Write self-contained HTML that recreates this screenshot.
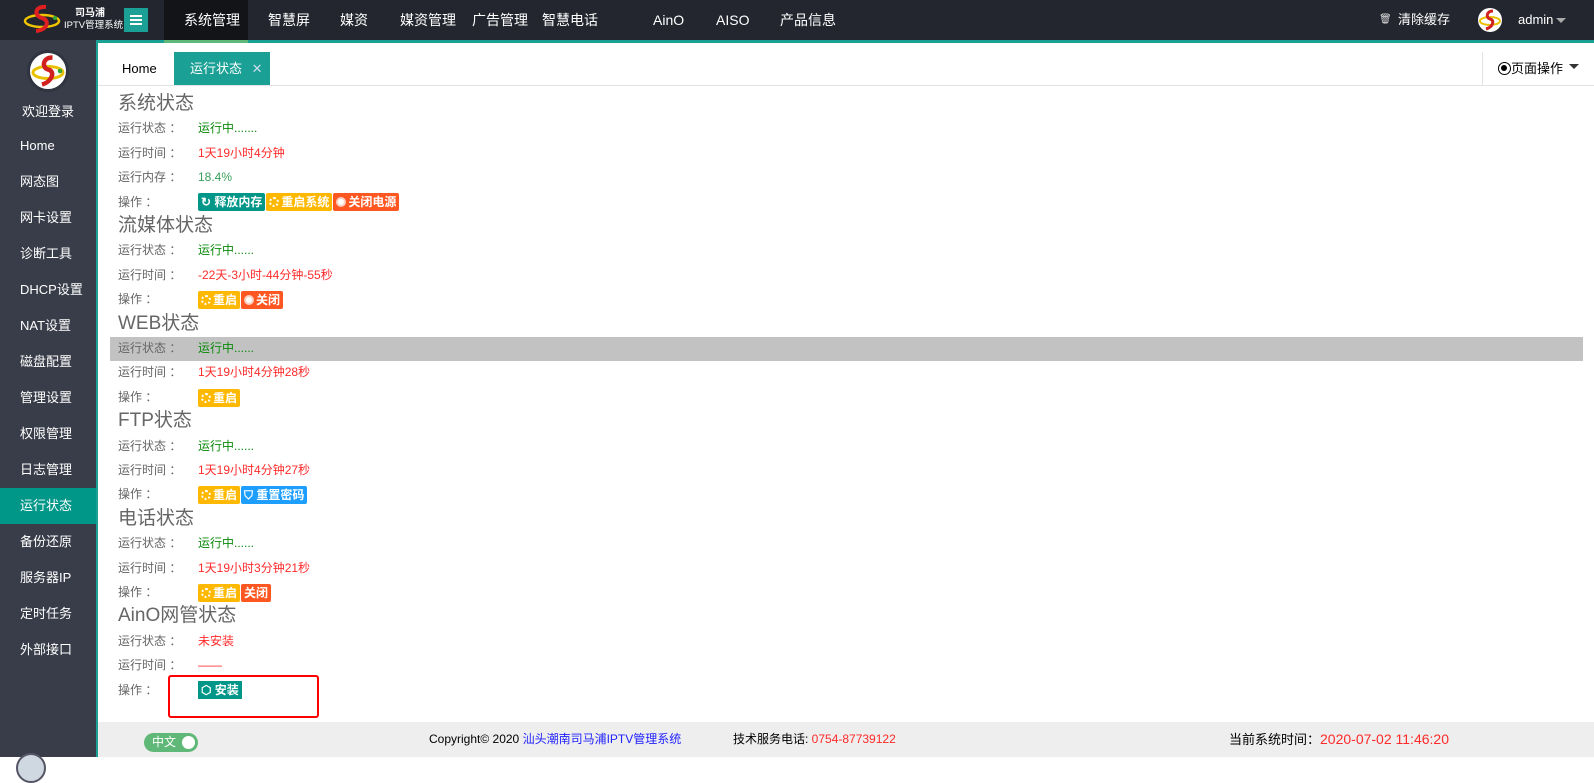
<!DOCTYPE html>
<html><head><meta charset="utf-8"><style>
*{margin:0;padding:0;box-sizing:border-box}
body{width:1594px;height:757px;overflow:hidden;background:#fff;font-family:"Liberation Sans","Noto Sans CJK SC",sans-serif;position:relative}
.abs{position:absolute}
#top{left:0;top:0;width:1594px;height:40px;background:#23262e}
#tline{left:0;top:40px;width:1594px;height:3px;background:#1aa094}
.nav{top:0;height:40px;line-height:40px;color:#fff;font-size:14px}
#side{left:0;top:40px;width:96px;height:717px;background:#393d49}
#sbor{left:96px;top:40px;width:2px;height:717px;background:#1aa094}
.si{left:0;width:96px;height:36px;line-height:36px;color:#fff;font-size:13px;padding-left:20px}
.row{left:118px;height:24.4px;line-height:24.4px;font-size:12px;color:#666;width:1460px}
.row .v{position:absolute;left:80px;top:0}
.title{font-size:19px;color:#666}
.g{color:#0a8a0a}.r{color:#ff2a2a}
.btn{display:inline-block;height:18px;line-height:18px;color:#fff;font-size:12px;font-weight:bold;padding:0 3px;margin-right:1px;vertical-align:middle;border-radius:2px}
.t{background:#009688}.o{background:#ffb800}.rd{background:#ff5722}.b{background:#1e9fff}
.ic{display:inline-block;width:10px;height:10px;border-radius:50%;vertical-align:-1px;margin-right:2px}
.dots{border:2px dotted #fff}
.dot{background:#fff;border:2px solid #ffd0c0}
</style></head><body>
<div class="abs" id="top"></div>
<div class="abs" id="tline"></div>
<div class="abs" style="left:164px;top:0;width:84px;height:40px;background:#121418"></div>
<div class="abs" style="left:164px;top:40px;width:84px;height:3px;background:#5fb878"></div>
<svg class="abs" style="left:22px;top:4px" width="40" height="30" viewBox="0 0 40 30"><ellipse cx="20" cy="17" rx="17" ry="6" fill="none" stroke="#f0c400" stroke-width="2.5"/><path d="M24 3 C12 2 12 12 20 14 C28 16 26 26 14 27" fill="none" stroke="#e02020" stroke-width="4"/><circle cx="33" cy="14" r="2" fill="#3a3"/></svg>
<div class="abs" style="left:64px;top:8px;width:52px;color:#fff;font-size:10px;line-height:12px;font-weight:bold;text-align:center;white-space:nowrap">司马浦<br><span style="font-weight:normal;font-size:9.5px">IPTV管理系统</span></div>
<div class="abs" style="left:124px;top:8px;width:24px;height:24px;background:#1aa094"><div style="position:absolute;left:6px;top:7px;width:12px;height:2px;background:#fff"></div><div style="position:absolute;left:6px;top:11px;width:12px;height:2px;background:#fff"></div><div style="position:absolute;left:6px;top:15px;width:12px;height:2px;background:#fff"></div></div>
<div class="abs nav" style="left:184px">系统管理</div>
<div class="abs nav" style="left:268px">智慧屏</div>
<div class="abs nav" style="left:340px">媒资</div>
<div class="abs nav" style="left:400px">媒资管理</div>
<div class="abs nav" style="left:472px">广告管理</div>
<div class="abs nav" style="left:542px">智慧电话</div>
<div class="abs nav" style="left:653px">AinO</div>
<div class="abs nav" style="left:716px">AISO</div>
<div class="abs nav" style="left:780px">产品信息</div>
<div class="abs nav" style="left:1379px;font-size:10px;color:#ddd">🗑</div>
<div class="abs nav" style="left:1398px;font-size:13px">清除缓存</div>
<div class="abs" style="left:1478px;top:8px;width:24px;height:24px;border-radius:50%;background:#fff;overflow:hidden"><svg width="24" height="24" viewBox="0 0 24 24"><ellipse cx="12" cy="13" rx="10" ry="4" fill="none" stroke="#e8c000" stroke-width="2"/><path d="M15 3C8 3 8 10 12 11C17 12 15 19 8 21" fill="none" stroke="#d02020" stroke-width="3"/></svg></div>
<div class="abs nav" style="left:1518px;font-size:13px">admin</div>
<div class="abs" style="left:1556px;top:18px;border:5px solid transparent;border-top-color:#aaa"></div>
<div class="abs" id="side"></div>
<div class="abs" id="sbor"></div>
<div class="abs" style="left:27px;top:50px;width:42px;height:42px;border-radius:50%;background:#fff;border:3px solid #2f3440;overflow:hidden"><svg width="36" height="36" viewBox="0 0 24 24"><ellipse cx="12" cy="13" rx="10" ry="4" fill="none" stroke="#e8c000" stroke-width="2"/><path d="M15 3C8 3 8 10 12 11C17 12 15 19 8 21" fill="none" stroke="#d02020" stroke-width="3"/><circle cx="20" cy="12" r="1.5" fill="#3a3"/></svg></div>
<div class="abs" style="left:0;top:101px;width:96px;text-align:center;color:#fff;font-size:13px">欢迎登录</div>
<div class="abs si" style="top:128px">Home</div>
<div class="abs si" style="top:164px">网态图</div>
<div class="abs si" style="top:200px">网卡设置</div>
<div class="abs si" style="top:236px">诊断工具</div>
<div class="abs si" style="top:272px">DHCP设置</div>
<div class="abs si" style="top:308px">NAT设置</div>
<div class="abs si" style="top:344px">磁盘配置</div>
<div class="abs si" style="top:380px">管理设置</div>
<div class="abs si" style="top:416px">权限管理</div>
<div class="abs si" style="top:452px">日志管理</div>
<div class="abs si" style="top:488px;background:#009688">运行状态</div>
<div class="abs si" style="top:524px">备份还原</div>
<div class="abs si" style="top:560px">服务器IP</div>
<div class="abs si" style="top:596px">定时任务</div>
<div class="abs si" style="top:632px">外部接口</div>
<div class="abs" style="left:16px;top:753px;width:30px;height:30px;border-radius:50%;background:#cfd8e0;border:2px solid #556"></div>
<div class="abs" style="left:98px;top:85px;width:1496px;height:1px;background:#e2e2e2"></div>
<div class="abs" style="left:122px;top:52px;line-height:33px;font-size:13px;color:#000">Home</div>
<div class="abs" style="left:174px;top:52px;width:96px;height:33px;background:#1aa094;color:#fff;font-size:13px;line-height:33px;padding-left:16px">运行状态 <span style="color:#cde;margin-left:6px">✕</span></div>
<div class="abs" style="left:1482px;top:52px;width:1px;height:33px;background:#e2e2e2"></div>
<div class="abs" style="left:1498px;top:52px;line-height:33px;font-size:13px;color:#000"><span style="display:inline-block;width:13px;height:13px;border:1.5px solid #000;border-radius:50%;vertical-align:-2px;position:relative"><span style="position:absolute;left:2px;top:2px;width:6px;height:6px;border-radius:50%;background:#000"></span></span>页面操作</div>
<div class="abs" style="left:1569px;top:64px;border:5px solid transparent;border-top-color:#333"></div>
<div class="abs" style="left:110px;top:337px;width:1473px;height:24px;background:#c2c2c2"></div>
<div class="abs" style="left:0;top:92px">
<div class="abs row title" style="top:0">系统状态</div>
<div class="abs row" style="top:24.4px">运行状态 ：<span class="v g">运行中.......</span></div>
<div class="abs row" style="top:48.8px">运行时间 ：<span class="v r">1天19小时4分钟</span></div>
<div class="abs row" style="top:73.2px">运行内存 ：<span class="v" style="color:#3aa05a">18.4%</span></div>
<div class="abs row" style="top:97.6px">操作 ：<span class="v"><span class="btn t">↻ 释放内存</span><span class="btn o"><i class="ic dots"></i>重启系统</span><span class="btn rd"><i class="ic dot"></i>关闭电源</span></span></div>
<div class="abs row title" style="top:122px">流媒体状态</div>
<div class="abs row" style="top:146.4px">运行状态 ：<span class="v g">运行中......</span></div>
<div class="abs row" style="top:170.8px">运行时间 ：<span class="v r">-22天-3小时-44分钟-55秒</span></div>
<div class="abs row" style="top:195.2px">操作 ：<span class="v"><span class="btn o"><i class="ic dots"></i>重启</span><span class="btn rd"><i class="ic dot"></i>关闭</span></span></div>
<div class="abs row title" style="top:219.6px">WEB状态</div>
<div class="abs row" style="top:244px">运行状态 ：<span class="v g">运行中......</span></div>
<div class="abs row" style="top:268.4px">运行时间 ：<span class="v r">1天19小时4分钟28秒</span></div>
<div class="abs row" style="top:292.8px">操作 ：<span class="v"><span class="btn o"><i class="ic dots"></i>重启</span></span></div>
<div class="abs row title" style="top:317.2px">FTP状态</div>
<div class="abs row" style="top:341.6px">运行状态 ：<span class="v g">运行中......</span></div>
<div class="abs row" style="top:366px">运行时间 ：<span class="v r">1天19小时4分钟27秒</span></div>
<div class="abs row" style="top:390.4px">操作 ：<span class="v"><span class="btn o"><i class="ic dots"></i>重启</span><span class="btn b">⛉ 重置密码</span></span></div>
<div class="abs row title" style="top:414.8px">电话状态</div>
<div class="abs row" style="top:439.2px">运行状态 ：<span class="v g">运行中......</span></div>
<div class="abs row" style="top:463.6px">运行时间 ：<span class="v r">1天19小时3分钟21秒</span></div>
<div class="abs row" style="top:488px">操作 ：<span class="v"><span class="btn o"><i class="ic dots"></i>重启</span><span class="btn rd">关闭</span></span></div>
<div class="abs row title" style="top:512.4px">AinO网管状态</div>
<div class="abs row" style="top:536.8px">运行状态 ：<span class="v r">未安装</span></div>
<div class="abs row" style="top:561.2px">运行时间 ：<span class="v r">——</span></div>
<div class="abs row" style="top:585.6px">操作 ：<span class="v"><span class="btn t" style="border-radius:0">⬡ 安装</span></span></div>
</div>
<div class="abs" style="left:168px;top:675px;width:151px;height:43px;border:2px solid #f00;border-radius:3px"></div>
<div class="abs" style="left:98px;top:722px;width:1496px;height:35px;background:#eeeeee"></div>
<div class="abs" style="left:144px;top:733px;width:54px;height:19px;border-radius:10px;background:#5fb878;color:#fff;font-size:12px;line-height:19px;padding-left:8px">中文<span style="position:absolute;right:3px;top:3px;width:13px;height:13px;border-radius:50%;background:#fff"></span></div>
<div class="abs" style="left:429px;top:731px;font-size:12px;line-height:16px;color:#000">Copyright© 2020 <span style="color:#2222ff">汕头潮南司马浦IPTV管理系统</span></div>
<div class="abs" style="left:733px;top:731px;font-size:12px;line-height:16px;color:#000">技术服务电话: <span style="color:#ff2a2a">0754-87739122</span></div>
<div class="abs" style="left:1229px;top:731px;font-size:13px;line-height:16px;color:#000">当前系统时间：<span style="color:#ff2a2a;font-size:14px">2020-07-02 11:46:20</span></div>
</body></html>
